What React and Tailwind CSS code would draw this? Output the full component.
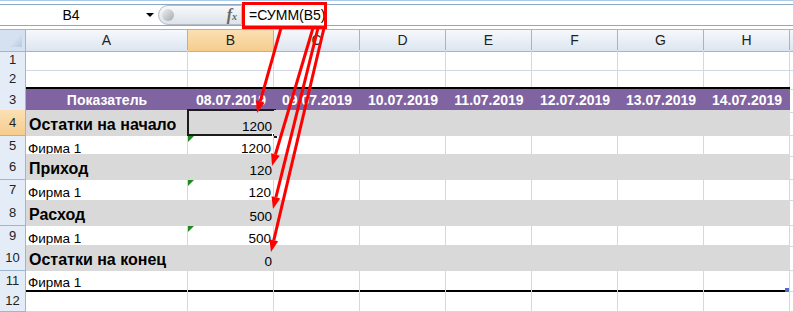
import React from "react";

const GRID = "grid grid-cols-[26px_162px_86px_86px_86px_86px_86px_86px_86px_1fr]";
const DATES = ["08.07.2019", "09.07.2019", "10.07.2019", "11.07.2019", "12.07.2019", "13.07.2019", "14.07.2019"];
const LETTERS = ["A", "B", "C", "D", "E", "F", "G", "H"];

const ROWS = [
  { n: 1, h: "h-[19px]", type: "empty" },
  { n: 2, h: "h-[18px]", type: "empty2" },
  { n: 3, h: "h-[23px]", type: "purple" },
  { n: 4, h: "h-[26px]", type: "gray", a: "Остатки на начало", b: "1200", sel: true },
  { n: 5, h: "h-[18px]", type: "white", a: "Фирма 1", b: "1200", tri: true },
  { n: 6, h: "h-[26px]", type: "gray", a: "Приход", b: "120" },
  { n: 7, h: "h-[20px]", type: "white", a: "Фирма 1", b: "120", tri: true },
  { n: 8, h: "h-[26px]", type: "gray", a: "Расход", b: "500" },
  { n: 9, h: "h-[19px]", type: "white", a: "Фирма 1", b: "500", tri: true },
  { n: 10, h: "h-[26px]", type: "gray", a: "Остатки на конец", b: "0" },
  { n: 11, h: "h-[19px]", type: "last", a: "Фирма 1" },
  { n: 12, h: "h-[22px]", type: "empty" },
];

const CELL_CLS = {
  empty: "border-r border-b border-[#d0d7e5]",
  empty2: "border-r border-[#d0d7e5]",
  purple: "bg-[#8064a2] border-y-2 border-black",
  gray: "bg-[#d9d9d9]",
  white: "border-r border-[#d0d7e5] border-b border-b-[#d9d9d9]",
  last: "border-r border-[#d0d7e5] border-b-2 border-b-black",
};

function RowHead({ n, active }) {
  return (
    <div
      className={
        active
          ? "bg-linear-to-b from-[#fbe0b4] to-[#f6cc8e] border-r border-b border-[#e6a95a] flex items-center justify-center text-[13px] text-[#222]"
          : "bg-[#e4ecf7] border-r border-b border-[#9eb6ce] flex items-center justify-center text-[13px] text-[#222]"
      }
    >
      {n}
    </div>
  );
}

function Row({ r }) {
  const cls = CELL_CLS[r.type];
  const cells = [];
  for (let i = 0; i < 8; i++) {
    let content = null;
    let extra = "";
    if (r.type === "purple") {
      content = i === 0 ? "Показатель" : DATES[i - 1];
      extra = " flex items-center justify-center text-white font-bold text-[14px] pt-[1px]";
    } else if (i === 0 && r.a) {
      if (r.type === "gray") {
        extra = " flex items-end pl-[3px] pb-[2px] font-bold text-[16px] leading-[18px] text-black whitespace-nowrap";
      } else {
        extra = " flex items-end pl-[2px] text-[13.5px] leading-[15px] text-black whitespace-nowrap";
      }
      content = r.a;
    } else if (i === 1 && r.b) {
      extra =
        r.type === "gray"
          ? " flex items-end justify-end pr-[2px] pb-[2px] text-[13.5px] leading-[15px] text-black"
          : " flex items-end justify-end pr-[2px] text-[13.5px] leading-[15px] text-black";
      content = r.b;
    }
    cells.push(
      <div key={i} className={"relative " + cls + extra}>
        {content}
        {i === 1 && r.sel && (
          <>
            <div className="absolute -top-[1px] -left-[1px] -right-[2px] bottom-0 border-2 border-[#1c1c1c]" />
            <div className="absolute -right-[4px] -bottom-[3px] w-[6px] h-[6px] bg-[#1c1c1c] border border-white" />
          </>
        )}
        {i === 1 && r.tri && (
          <div className="absolute top-0 left-0 w-0 h-0 border-t-[6px] border-t-[#1f8a1f] border-r-[6px] border-r-transparent" />
        )}
        {i === 7 && r.type === "last" && (
          <div className="absolute right-0 -bottom-[2px] w-[4px] h-[4px] bg-[#4a6cc4]" />
        )}
      </div>
    );
  }
  return (
    <div className={GRID + " " + r.h}>
      <RowHead n={r.n} active={r.sel} />
      {cells}
      <div className="border-b border-[#d0d7e5]" />
    </div>
  );
}

function Arrows() {
  const arrows = [
    [281, 28, 257, 113],
    [313, 28, 272, 166],
    [318, 28, 273, 209],
    [324, 28, 271, 252],
  ];
  return (
    <svg className="absolute inset-0 pointer-events-none" width="793" height="312" viewBox="0 0 793 312">
      <rect x="243.5" y="3.5" width="82" height="24" fill="none" stroke="#ff0000" strokeWidth="3" />
      {arrows.map(([x1, y1, x2, y2], k) => {
        const dx = x2 - x1;
        const dy = y2 - y1;
        const len = Math.hypot(dx, dy);
        const ux = dx / len;
        const uy = dy / len;
        const bx = x2 - ux * 12;
        const by = y2 - uy * 12;
        const px = -uy * 4.5;
        const py = ux * 4.5;
        return (
          <g key={k}>
            <line x1={x1} y1={y1} x2={bx} y2={by} stroke="#ff0000" strokeWidth="3" />
            <polygon
              points={`${x2},${y2} ${bx + px},${by + py} ${bx - px},${by - py}`}
              fill="#ff0000"
            />
          </g>
        );
      })}
    </svg>
  );
}

export default function App() {
  return (
    <div className="relative w-[793px] h-[312px] overflow-hidden bg-white font-['Liberation_Sans',Arial,sans-serif] text-black">
      {/* Formula bar */}
      <div className="h-[29px] bg-white border-t border-[#a9cde8] pt-[3px]">
        <div className="h-[22px] border-y border-[#8fa7c3] flex items-center">
          <div className="w-[142px] text-center text-[14px] leading-[20px]">B4</div>
          <div className="w-[16px] flex justify-center">
            <div className="w-0 h-0 border-l-[4px] border-r-[4px] border-t-[4px] border-l-transparent border-r-transparent border-t-black" />
          </div>
          <div className="w-[84px] h-[20px] rounded-l-full bg-linear-to-b from-[#f7f9fb] to-[#dde3ea] border border-[#b3bdca] flex items-center justify-between pl-[3px] pr-[4px]">
            <div className="w-[12px] h-[12px] rounded-full bg-linear-to-br from-[#f0f0f0] to-[#a4a9b0]" />
            <span className="font-['Liberation_Serif',serif] italic font-bold text-[16px] text-[#666] leading-none">
              f<span className="text-[10px]">x</span>
            </span>
          </div>
          <div className="pl-[7px] text-[14px] leading-[20px]">=СУММ(B5)</div>
        </div>
      </div>

      {/* Column headers */}
      <div className={GRID + " h-[21px] border-t border-[#9eb6ce]"}>
        <div className="relative bg-[#d5e1f1] border-r border-b border-[#9eb6ce]">
          <svg className="absolute inset-0" width="25" height="20" viewBox="0 0 25 20">
            <defs>
              <linearGradient id="cg" x1="0" y1="0" x2="1" y2="1">
                <stop offset="0" stopColor="#eef3fa" />
                <stop offset="1" stopColor="#b7c9e2" />
              </linearGradient>
            </defs>
            <polygon points="22,4 22,17 9,17" fill="url(#cg)" />
          </svg>
        </div>
        {LETTERS.map((l) => (
          <div
            key={l}
            className={
              l === "B"
                ? "bg-linear-to-b from-[#fbe0b4] to-[#f6cc8e] border-r border-b border-[#e6a95a] flex items-center justify-center text-[14px] text-[#222]"
                : "bg-linear-to-b from-[#f6f9fc] to-[#dce5f0] border-r border-b border-[#9eb6ce] flex items-center justify-center text-[14px] text-[#222]"
            }
          >
            {l}
          </div>
        ))}
        <div className="bg-linear-to-b from-[#f6f9fc] to-[#dce5f0] border-b border-[#9eb6ce]" />
      </div>

      {/* Rows */}
      {ROWS.map((r) => (
        <Row key={r.n} r={r} />
      ))}

      <Arrows />
    </div>
  );
}
